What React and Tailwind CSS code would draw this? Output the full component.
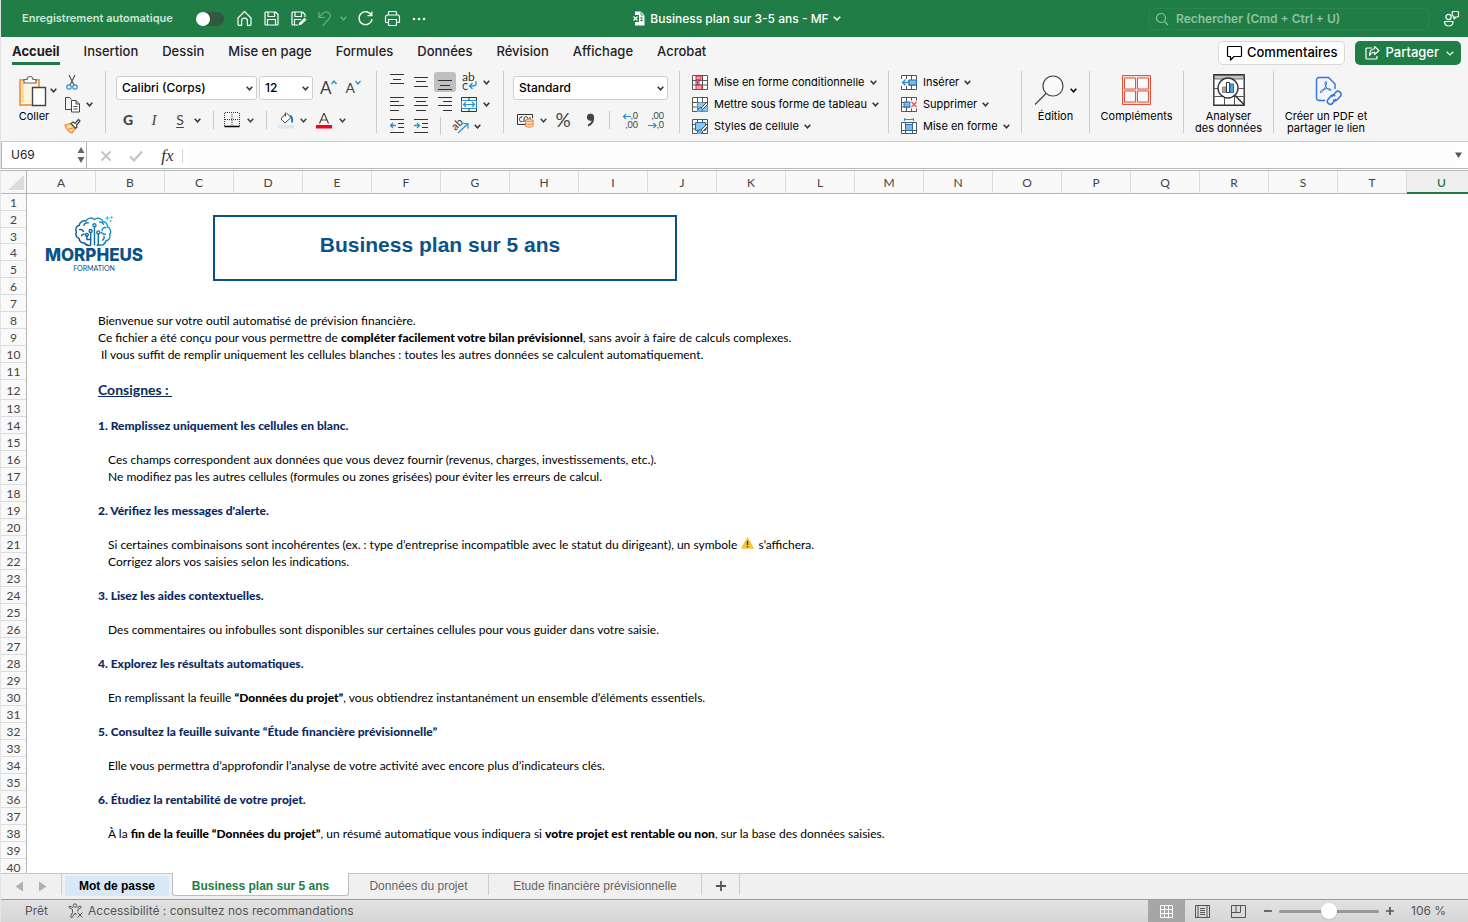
import React, { useState } from "react";

const MENU_TABS = [
  "Accueil",
  "Insertion",
  "Dessin",
  "Mise en page",
  "Formules",
  "Données",
  "Révision",
  "Affichage",
  "Acrobat",
];

const COLUMNS = "ABCDEFGHIJKLMNOPQRSTU".split("");
const ROWS = Array.from({ length: 40 }, (_, i) => i + 1);

// kind: "text" starts at the cell edge, "item" is indented, "step" is a bold title
const CONTENT = {
  8: { kind: "text", body: "Bienvenue sur votre outil automatisé de prévision financière." },
  9: {
    kind: "text",
    body: (
      <>
        Ce fichier a été conçu pour vous permettre de{" "}
        <Strong>compléter facilement votre bilan prévisionnel</Strong>, sans
        avoir à faire de calculs complexes.
      </>
    ),
  },
  10: {
    kind: "text",
    body: "\u00a0Il vous suffit de remplir uniquement les cellules blanches : toutes les autres données se calculent automatiquement.",
  },
  12: { kind: "heading", body: "Consignes :\u00a0" },
  14: { kind: "step", body: "1. Remplissez uniquement les cellules en blanc." },
  16: {
    kind: "item",
    body: "Ces champs correspondent aux données que vous devez fournir (revenus, charges, investissements, etc.).",
  },
  17: {
    kind: "item",
    body: "Ne modifiez pas les autres cellules (formules ou zones grisées) pour éviter les erreurs de calcul.",
  },
  19: { kind: "step", body: "2. Vérifiez les messages d'alerte." },
  21: {
    kind: "item",
    body: (
      <>
        Si certaines combinaisons sont incohérentes (ex. : type d’entreprise
        incompatible avec le statut du dirigeant), un symbole <Warning />{" "}
        s’affichera.
      </>
    ),
  },
  22: { kind: "item", body: "Corrigez alors vos saisies selon les indications." },
  24: { kind: "step", body: "3. Lisez les aides contextuelles." },
  26: {
    kind: "item",
    body: "Des commentaires ou infobulles sont disponibles sur certaines cellules pour vous guider dans votre saisie.",
  },
  28: { kind: "step", body: "4. Explorez les résultats automatiques." },
  30: {
    kind: "item",
    body: (
      <>
        En remplissant la feuille <Strong>“Données du projet”</Strong>, vous
        obtiendrez instantanément un ensemble d’éléments essentiels.
      </>
    ),
  },
  32: {
    kind: "step",
    body: "5. Consultez la feuille suivante “Étude financière prévisionnelle”",
  },
  34: {
    kind: "item",
    body: "Elle vous permettra d’approfondir l’analyse de votre activité avec encore plus d’indicateurs clés.",
  },
  36: { kind: "step", body: "6. Étudiez la rentabilité de votre projet." },
  38: {
    kind: "item",
    body: (
      <>
        À la <Strong>fin de la feuille “Données du projet”</Strong>, un résumé
        automatique vous indiquera si{" "}
        <Strong>votre projet est rentable ou non</Strong>, sur la base des
        données saisies.
      </>
    ),
  },
};

const KIND_CLASS = {
  text: "pl-[2px] text-black",
  item: "pl-[12px] text-black",
  step: "pl-[2px] font-black text-[#0b2a63]",
  heading: "pl-[2px] text-[14px] font-bold text-[#0b2a63] underline",
};

function Strong({ children }) {
  return <strong className="font-black">{children}</strong>;
}

function Icon({ w = 16, h = 16, className = "", children }) {
  return (
    <svg
      width={w}
      height={h}
      viewBox={`0 0 ${w} ${h}`}
      fill="none"
      stroke="currentColor"
      className={`shrink-0 ${className}`}
      aria-hidden="true"
    >
      {children}
    </svg>
  );
}

function Chevron({ className = "" }) {
  return (
    <Icon w={7} h={5} className={className}>
      <path d="M.7 .8l2.800 3L6.300 .8" strokeWidth="1.500" />
    </Icon>
  );
}

function Warning() {
  return (
    <svg width="13" height="12" viewBox="0 0 13 12" className="mx-px inline-block align-baseline" aria-label="Attention">
      <path d="M6.500 .5L12.500 11.300H.5z" fill="#fdc62f" stroke="#f0b020" strokeWidth=".6" strokeLinejoin="round" />
      <path d="M6.500 4v4" stroke="#333" strokeWidth="1.400" />
      <circle cx="6.500" cy="9.700" r=".8" fill="#333" />
    </svg>
  );
}

function Separator() {
  return <span className="h-[18px] w-px shrink-0 bg-[#c9c9c9]" />;
}

function TitleBar() {
  const [autoSave, setAutoSave] = useState(false);
  return (
    <header className="grid h-[37px] shrink-0 grid-cols-[1fr_auto_1fr] items-center bg-[#207d45] text-white">
      <div className="flex items-center pl-[21px]">
        <label htmlFor="autosave" className="w-[174px] text-[11px] font-semibold text-[#cfe5d7]">
          Enregistrement automatique
        </label>
        <input
          id="autosave"
          type="checkbox"
          role="switch"
          checked={autoSave}
          onChange={() => setAutoSave(!autoSave)}
          className="h-[14px] w-7 appearance-none rounded-full bg-[#2f5a40] before:block before:h-[14px] before:w-[14px] before:rounded-full before:bg-white checked:before:translate-x-[14px]"
        />
        <div className="ml-[12px] flex items-center gap-[10px]">
          <button type="button" aria-label="Accueil">
            <Icon w={17} h={17}>
              <path d="M2 8L8.500 1.500 15 8v6.300a1 1 0 0 1-1 1h-2.600v-4.200a2.900 2.900 0 0 0-5.800 0v4.200H3a1 1 0 0 1-1-1z" strokeWidth="1.200" strokeLinejoin="round" />
            </Icon>
          </button>
          <button type="button" aria-label="Enregistrer">
            <Icon w={17} h={17}>
              <path d="M3 2h9.500L15 4.500V14a1 1 0 0 1-1 1H3a1 1 0 0 1-1-1V3a1 1 0 0 1 1-1zM5 2v4.500h6.500V2M4.500 15V9.500h8V15" strokeWidth="1.200" strokeLinejoin="round" />
            </Icon>
          </button>
          <button type="button" aria-label="Enregistrer sous">
            <Icon w={17} h={17}>
              <path d="M8 15H3a1 1 0 0 1-1-1V3a1 1 0 0 1 1-1h9.500L15 4.500V7M5 2v4.500h6.500V2M4.500 15V9.500H11" strokeWidth="1.200" strokeLinejoin="round" />
              <path d="M8.500 15.500l1-3 5-4.800 2 2-5 4.900z" fill="white" stroke="none" />
            </Icon>
          </button>
          <button type="button" aria-label="Annuler" className="flex items-center gap-[6px] text-[#6aab83]">
            <Icon w={17} h={17}>
              <path d="M2 1.500v6h6M2 7.200l4-3.900c4-3.500 9 .4 6.700 4.300C11.500 10 8.500 13 5.500 16" strokeWidth="1.200" />
            </Icon>
            <Chevron />
          </button>
          <button type="button" aria-label="Rétablir">
            <Icon w={17} h={17}>
              <path d="M14.500 5.500A6.500 6.500 0 1 0 15 9M14.800 1.500v4.200h-4.300" strokeWidth="1.300" />
            </Icon>
          </button>
          <button type="button" aria-label="Imprimer">
            <Icon w={17} h={17}>
              <path d="M4.500 5V2.500a1 1 0 0 1 1-1h6a1 1 0 0 1 1 1V5M4.500 12.500h-2a1 1 0 0 1-1-1V7a2 2 0 0 1 2-2h10a2 2 0 0 1 2 2v4.500a1 1 0 0 1-1 1h-2M4.500 9.500h8v5a1 1 0 0 1-1 1h-6a1 1 0 0 1-1-1z" strokeWidth="1.200" />
            </Icon>
          </button>
          <button type="button" aria-label="Plus">
            <Icon w={16} h={6}>
              <g fill="currentColor" stroke="none">
                <circle cx="3" cy="3" r="1.300" />
                <circle cx="8" cy="3" r="1.300" />
                <circle cx="13" cy="3" r="1.300" />
              </g>
            </Icon>
          </button>
        </div>
      </div>

      <button type="button" className="flex items-center gap-[5px] pl-1 text-[12px] font-medium">
        <Icon w={13} h={15}>
          <path d="M3 .5h6L12.500 4v10.500H3z" fill="white" stroke="none" />
          <path d="M9 .5V4h3.500" stroke="#207d45" strokeWidth=".8" />
          <rect x="0" y="4" width="7" height="7" fill="#207d45" stroke="none" />
          <path d="M1.500 5.500l4 4M5.500 5.500l-4 4" strokeWidth="1.200" />
          <path d="M8 7h3M8 9.500h3M9.500 6v4.500" stroke="#207d45" strokeWidth=".7" />
        </Icon>
        Business plan sur 3-5 ans - MF
        <Icon w={8} h={5} className="-ml-px">
          <path d="M.7 .8L4 3.900 7.300 .8" strokeWidth="1.500" />
        </Icon>
      </button>

      <div className="flex items-center justify-end gap-[14px] pr-2">
        <div className="flex h-[22px] w-[280px] items-center gap-[7px] rounded border border-[#2a8550] px-[5px] text-[#8fc2a3]">
          <Icon w={14} h={14}>
            <circle cx="6" cy="6" r="4.500" strokeWidth="1.200" />
            <path d="M9.500 9.500l3.500 3.500" strokeWidth="1.200" />
          </Icon>
          <input
            type="search"
            aria-label="Rechercher"
            placeholder="Rechercher (Cmd + Ctrl + U)"
            className="min-w-0 flex-1 bg-transparent text-[12px] font-semibold outline-none placeholder:text-[#8fc2a3]"
          />
        </div>
        <button type="button" aria-label="Présence">
          <Icon w={17} h={18}>
            <circle cx="5.500" cy="7" r="2.600" strokeWidth="1.200" />
            <path d="M1.500 11.500h8.500c0 6-8.500 6-8.500 0zM9.500 1.500h5a1 1 0 0 1 1 1v3.500a1 1 0 0 1-1 1h-1.500l-2 2V7l-2-2z" strokeWidth="1.200" strokeLinejoin="round" />
          </Icon>
        </button>
      </div>
    </header>
  );
}

function MenuBar() {
  return (
    <nav className="flex h-[31px] shrink-0 items-start justify-between pr-[7px] pl-[11px]">
      <div className="flex gap-[24px] pt-1">
        {MENU_TABS.map((tab, i) => (
          <button
            key={tab}
            type="button"
            className={
              i === 0
                ? "border-b-[3px] border-[#1f7a45] text-[13px] leading-[21px] font-bold text-[#222]"
                : "border-b-[3px] border-transparent text-[13px] leading-[21px] font-medium text-[#222]"
            }
          >
            {tab}
          </button>
        ))}
      </div>
      <div className="flex gap-[10px] pt-1 text-[13px] font-medium">
        <button
          type="button"
          className="flex h-6 items-center gap-1 rounded-[5px] border border-[#d8d8d8] bg-white px-[7px] text-black"
        >
          <Icon w={17} h={16}>
            <path d="M2.500 1.500h12a1 1 0 0 1 1 1v8a1 1 0 0 1-1 1H8L4.500 15v-3.500h-2a1 1 0 0 1-1-1v-8a1 1 0 0 1 1-1z" strokeWidth="1.200" strokeLinejoin="round" />
          </Icon>
          Commentaires
        </button>
        <button
          type="button"
          className="flex h-6 items-center gap-1 rounded-[5px] bg-[#207d45] pr-[7px] pl-[9px] text-white"
        >
          <Icon w={17} h={16}>
            <path d="M8 3H3a1 1 0 0 0-1 1v9a1 1 0 0 0 1 1h9a1 1 0 0 0 1-1v-2" strokeWidth="1.200" />
            <path d="M10.500 1.500l4.500 4-4.500 4V7.300C8 7.200 6.500 8.500 5.500 10.500c0-4 2-6.400 5-6.700z" strokeWidth="1.100" strokeLinejoin="round" />
          </Icon>
          Partager
          <Icon w={8} h={5} className="ml-[3px]">
            <path d="M.7 .8L4 3.900 7.300 .8" strokeWidth="1.200" />
          </Icon>
        </button>
      </div>
    </nav>
  );
}

function Group({ className = "", children }) {
  return (
    <div className={`h-[62px] shrink-0 border-r border-[#cdcdcd] ${className}`}>
      {children}
    </div>
  );
}

function RibbonSelect({ label, value, className }) {
  return (
    <span className={`relative flex items-center ${className}`}>
      <select
        aria-label={label}
        defaultValue={value}
        className="h-6 w-full appearance-none rounded-[3px] border border-[#cfcfcf] bg-white pl-[5px] text-[12px] font-medium text-black"
      >
        <option>{value}</option>
      </select>
      <Chevron className="pointer-events-none absolute right-1" />
    </span>
  );
}

// lines: [x1, x2, y] triples
function Lines({ w = 16, h = 16, lines, children }) {
  return (
    <Icon w={w} h={h}>
      {lines.map(([a, b, y]) => (
        <path key={y} d={`M${a} ${y}.5H${b}`} />
      ))}
      {children}
    </Icon>
  );
}

function ClipboardGroup() {
  return (
    <Group className="flex w-[105px] pl-[15px]">
      <div className="flex w-9 flex-col items-center">
        <button type="button" className="flex flex-col items-center gap-[2px] pt-1 text-[11px] leading-[14px] text-black">
          <Icon w={30} h={32}>
            <path d="M1 5h19v25H1z" fill="#fdf3df" stroke="#f0a255" strokeWidth="2" />
            <path d="M3.500 7v20.500" stroke="#fbd798" strokeWidth="2.500" />
            <path d="M5 8V4.500h3c.5-4 5.500-4 6 0h3V8z" fill="#fff" stroke="#666" strokeWidth="1.200" />
            <path d="M13.500 12.500h13v18h-13z" fill="#fff" stroke="#444" strokeWidth="1.400" />
          </Icon>
          Coller
        </button>
      </div>
      <Chevron className="mt-[17px] -ml-[2px]" />
      <div className="ml-[7px] flex flex-col gap-[5px] pt-[3px]">
        <button type="button" aria-label="Couper">
          <Icon w={16} h={17}>
            <path d="M5 1l5 10M11 1L6 11" stroke="#555" strokeWidth="1.200" />
            <circle cx="5" cy="13" r="2.200" stroke="#2a8fd0" strokeWidth="1.200" />
            <circle cx="11" cy="13" r="2.200" stroke="#2a8fd0" strokeWidth="1.200" />
          </Icon>
        </button>
        <button type="button" aria-label="Copier" className="flex items-center gap-[5px]">
          <Icon w={17} h={17}>
            <path d="M7 13.500H1.500v-12h4l2 2" stroke="#444" />
            <path d="M7.500 4.500H12l3.500 3.500v8h-8zM12 4.500V8h3.500M9.500 10.500h4M9.500 13h4" fill="#fff" stroke="#444" />
          </Icon>
          <Chevron />
        </button>
        <button type="button" aria-label="Reproduire la mise en forme">
          <Icon w={17} h={16}>
            <path d="M1 7l6-1.500 4.500 4.500L8 15C5 14 2.500 11 1 7z" fill="#fbd798" stroke="#ea8a3c" strokeWidth="1.200" />
            <path d="M4.500 11l5-1" stroke="#ea8a3c" />
            <path d="M7 5.500l2-1.500 2 1.500L14.500 1.500 16 3l-3.500 4 .5 2-1.500 1.500z" fill="#fff" stroke="#444" strokeWidth="1.200" />
          </Icon>
        </button>
      </div>
    </Group>
  );
}

function FontGroup() {
  return (
    <Group className="w-[271px] pt-[5px] pl-[10px]">
      <div className="flex items-center">
        <RibbonSelect label="Police" value="Calibri (Corps)" className="w-[141px]" />
        <RibbonSelect label="Taille" value="12" className="ml-[2px] w-[54px]" />
        <button type="button" aria-label="Augmenter la taille" className="ml-[7px] flex font-[Lato] text-[17px] leading-[22px] text-[#444]">
          A
          <Icon w={6} h={5} className="mt-[3px] -ml-px">
            <path d="M.5 4L3 1l2.500 3" stroke="#2a8fd0" strokeWidth="1.300" />
          </Icon>
        </button>
        <button type="button" aria-label="Réduire la taille" className="ml-[9px] flex font-[Lato] text-[14px] leading-[22px] text-[#444]">
          A
          <Icon w={6} h={5} className="mt-[3px]">
            <path d="M.5 1L3 4l2.500-3" stroke="#2a8fd0" strokeWidth="1.300" />
          </Icon>
        </button>
      </div>
      <div className="mt-[8px] flex h-6 items-center text-[#444]">
        <button type="button" className="w-6 font-[Lato] text-[14px] leading-5 font-black">G</button>
        <button type="button" className="ml-[2px] w-6 font-['Liberation_Serif'] text-[15px] leading-5 italic">I</button>
        <button type="button" className="ml-[2px] w-6 font-[Lato] text-[14px] leading-5 underline underline-offset-2">S</button>
        <Chevron className="ml-[2px] text-[#333]" />
        <span className="w-[12px]" />
        <Separator />
        <button type="button" aria-label="Bordures" className="ml-[10px] flex items-center gap-[7px]">
          <Icon w={16} h={16}>
            <path d="M1 .5h14M.5 1v13M15.500 1v13M8 2v12M1 7.500h14" strokeDasharray="1 1" stroke="#333" />
            <path d="M.5 14.500h15" stroke="#000" strokeWidth="1.500" />
          </Icon>
          <Chevron />
        </button>
        <span className="w-[12px]" />
        <Separator />
        <button type="button" aria-label="Couleur de remplissage" className="ml-[11px] flex items-center gap-[5px]">
          <Icon w={17} h={17}>
            <path d="M0 13h16v3.500H0z" fill="#d9e8f7" stroke="none" />
            <path d="M7.500 1.500L3 7l4 4 6-5.500-4.500-4.500" fill="#fff" stroke="#444" />
            <path d="M7.500 .5v4" stroke="#444" />
            <path d="M12 4c2.500.5 2.500 3 2 6.500" stroke="#1d6fb5" strokeWidth="1.800" />
          </Icon>
          <Chevron />
        </button>
        <button type="button" aria-label="Couleur de police" className="ml-[9px] flex items-center gap-[7px]">
          <Icon w={16} h={17}>
            <path d="M3.500 11.500l4.300-10h.4l4.300 10M5 8h6" stroke="#444" strokeWidth="1.200" />
            <path d="M0 13h16v3.500H0z" fill="#f8001c" stroke="none" />
          </Icon>
          <Chevron />
        </button>
      </div>
    </Group>
  );
}

function AlignGroup() {
  return (
    <Group className="flex w-[127px] flex-col pl-[9px] text-[#333]">
      <div className="flex h-[22px] shrink-0 items-center gap-[2px]">
        <button type="button" aria-label="Aligner en haut" className="flex h-5 w-[22px] justify-center">
          <Lines h={20} lines={[[1, 15, 2], [4, 12, 7], [1, 15, 11]]} />
        </button>
        <button type="button" aria-label="Aligner au centre" className="flex h-5 w-[22px] justify-center">
          <Lines h={20} lines={[[1, 15, 5], [3, 13, 9], [1, 15, 14]]} />
        </button>
        <button type="button" aria-label="Aligner en bas" className="flex h-5 w-[22px] justify-center rounded-[3px] bg-[#c0c0c0]">
          <Lines h={20} lines={[[1, 15, 8], [3, 13, 13], [1, 15, 17]]} />
        </button>
        <button type="button" aria-label="Renvoyer à la ligne" className="ml-[4px] flex items-center gap-[4px]">
          <span className="flex h-5 w-[17px] flex-col text-left font-[Lato] text-[12px] leading-[9px] text-[#333]">
            ab
            <Icon w={16} h={10}>
              <path d="M5.500 3C3.500 1.500 1 2.800 1 5.500s2.500 4 4.500 2.500" stroke="#444" strokeWidth="1.100" />
              <path d="M13.500 0c1.500 3 .5 5-3 5H7.500M10.500 2l-3 3 3 3" stroke="#2a8fd0" strokeWidth="1.300" />
            </Icon>
          </span>
          <Chevron />
        </button>
      </div>
      <div className="flex h-[22px] shrink-0 items-center gap-[2px]">
        <button type="button" aria-label="Gauche" className="flex w-[22px] justify-center">
          <Lines lines={[[1, 15, 1], [1, 10, 5], [1, 15, 9], [1, 10, 14]]} />
        </button>
        <button type="button" aria-label="Centrer" className="flex w-[22px] justify-center">
          <Lines lines={[[1, 15, 1], [3, 13, 5], [1, 15, 9], [3, 13, 14]]} />
        </button>
        <button type="button" aria-label="Droite" className="flex w-[22px] justify-center">
          <Lines lines={[[1, 15, 1], [6, 15, 5], [1, 15, 9], [6, 15, 14]]} />
        </button>
        <button type="button" aria-label="Fusionner" className="ml-[3px] flex items-center gap-[6px]">
          <Icon w={16} h={15}>
            <path d="M.5 .5h15v14H.5zM8 .5v3M8 11.500v3" stroke="#333" />
            <path d="M.5 3.500h15v8H.5z" fill="#fff" stroke="#2a8fd0" />
            <path d="M3 7.500h10M5 5L2.500 7.500 5 10M11 5l2.500 2.500L11 10" stroke="#2a8fd0" strokeWidth="1.200" />
          </Icon>
          <Chevron />
        </button>
      </div>
      <div className="flex h-[22px] shrink-0 items-center gap-[2px]">
        <button type="button" aria-label="Diminuer le retrait" className="flex w-[22px] justify-center">
          <Lines lines={[[1, 15, 1], [9, 15, 5], [9, 15, 9], [1, 15, 14]]}>
            <path d="M7 7.500H1.500M4 5L1.500 7.500 4 10" stroke="#2a8fd0" strokeWidth="1.300" />
          </Lines>
        </button>
        <button type="button" aria-label="Augmenter le retrait" className="flex w-[22px] justify-center">
          <Lines lines={[[1, 15, 1], [9, 15, 5], [9, 15, 9], [1, 15, 14]]}>
            <path d="M1 7.500h5.500M4 5l2.500 2.500L4 10" stroke="#2a8fd0" strokeWidth="1.300" />
          </Lines>
        </button>
        <span className="ml-[6px] flex"><Separator /></span>
        <button type="button" aria-label="Orientation" className="ml-[8px] flex items-center gap-[5px]">
          <span className="relative flex h-4 w-[18px] items-start">
            <span className="-rotate-45 font-[Lato] text-[11px] leading-3 text-[#333]">ab</span>
            <Icon w={12} h={12} className="absolute right-0 bottom-0">
              <path d="M1 11L11 1.500M6 1.500h5v5" stroke="#2a8fd0" strokeWidth="1.200" />
            </Icon>
          </span>
          <Chevron />
        </button>
      </div>
    </Group>
  );
}

function NumberGroup() {
  return (
    <Group className="w-[176px] pt-[5px] pl-[9px]">
      <RibbonSelect label="Format de nombre" value="Standard" className="w-[155px]" />
      <div className="mt-[8px] flex h-6 items-center text-[#444]">
        <button type="button" aria-label="Format monétaire" className="ml-[4px] flex items-center gap-[6px]">
          <Icon w={17} h={15}>
            <path d="M8 11.500H.5v-10h15V5" stroke="#333" />
            <path d="M5.500 4C3 3.500 2.500 5 2.500 6.500S3.500 9 5.500 8.500M7 9V6c0-3 4-3 4 0M13 4v2" stroke="#333" />
            <path d="M8.500 7v6c1.500 1.500 6 1.500 7.500 0V7c-1.500-1.300-6-1.300-7.500 0zM8.500 7.500c1.500 1.200 6 1.200 7.500 0M8.500 10.500c1.500 1.200 6 1.200 7.500 0" fill="#fde4c8" stroke="#ea7a2c" />
          </Icon>
          <Chevron />
        </button>
        <button type="button" className="ml-[7px] w-[18px] font-[Lato] text-[19px] leading-6">%</button>
        <button type="button" aria-label="Séparateur de milliers" className="ml-[14px]">
          <Icon w={9} h={14}>
            <path d="M2 12.500C6 11 7.200 8.500 7 5" strokeWidth="2" />
            <circle cx="4.500" cy="4.200" r="3.200" fill="currentColor" />
          </Icon>
        </button>
        <span className="w-[14px]" />
        <Separator />
        <button type="button" aria-label="Ajouter une décimale" className="relative ml-[12px] block h-[18px] w-4 text-right font-[Lato] text-[9px] leading-[9px]">
          ,0
          <br />
          ,00
          <Icon w={10} h={7} className="absolute top-[2px] left-0">
            <path d="M9 3.500H1.500M4 1L1.500 3.500 4 6" stroke="#2a8fd0" strokeWidth="1.200" />
          </Icon>
        </button>
        <button type="button" aria-label="Réduire les décimales" className="relative ml-[10px] block h-[18px] w-4 text-right font-[Lato] text-[9px] leading-[9px]">
          ,00
          <br />
          ,0
          <Icon w={10} h={7} className="absolute bottom-0 left-0">
            <path d="M0 3.500h8M5.500 1L8 3.500 5.500 6" stroke="#2a8fd0" strokeWidth="1.200" />
          </Icon>
        </button>
      </div>
    </Group>
  );
}

function GridBase() {
  return <path d="M.5 .5h15v14H.5zM5.500 .5v14M10.500 .5v14M.5 5.500h15M.5 10h15" fill="#fff" stroke="#555" />;
}

function Brush() {
  return (
    <>
      <path d="M15.500 4.500L9 11l1.500 1.500 5-5z" fill="#fff" stroke="#444" />
      <path d="M8.500 10.500c-3 0-2 3-4.500 4.500 3 1 6.500 0 6.500-2.500z" fill="#7db8e8" stroke="#1d6fb5" />
    </>
  );
}

function RowButton({ icon, children }) {
  return (
    <button type="button" className="flex h-[22px] shrink-0 items-center text-[11px] text-black">
      {icon}
      <span className="mr-[5px] ml-[6px]">{children}</span>
      <Chevron className="text-[#333]" />
    </button>
  );
}

function StylesGroup() {
  return (
    <Group className="flex w-[209px] flex-col pl-[12px]">
      <RowButton
        icon={
          <Icon w={16} h={15}>
            <GridBase />
            <path d="M4 1h5v4H4zM4 10h6v4.500H4zM4 5h3v5H4z" fill="#f8a0a8" stroke="#d8232e" />
            <path d="M4.500 5.500h2v4h-2z" fill="#2a8fd0" stroke="none" />
          </Icon>
        }
      >
        Mise en forme conditionnelle
      </RowButton>
      <RowButton
        icon={
          <Icon w={16} h={15}>
            <GridBase />
            <path d="M5.500 5.500h10v9h-10z" fill="#8cc4ee" stroke="none" />
            <Brush />
          </Icon>
        }
      >
        Mettre sous forme de tableau
      </RowButton>
      <RowButton
        icon={
          <Icon w={16} h={15}>
            <GridBase />
            <path d="M3.500 3.500h10v8h-10z" fill="#8cc4ee" stroke="#1d6fb5" />
            <Brush />
          </Icon>
        }
      >
        Styles de cellule
      </RowButton>
    </Group>
  );
}

function CellsGroup() {
  return (
    <Group className="flex w-[133px] flex-col pl-[12px]">
      <RowButton
        icon={
          <Icon w={16} h={15}>
            <GridBase />
            <path d="M8 5h7.500v5H8z" fill="#7db8e8" stroke="#1d6fb5" />
            <path d="M0 4h7v7H0z" fill="#f5f5f5" stroke="none" />
            <path d="M9 7.500H1.500M4.500 4.500l-3 3 3 3" stroke="#2a8fd0" strokeWidth="1.300" />
          </Icon>
        }
      >
        Insérer
      </RowButton>
      <RowButton
        icon={
          <Icon w={16} h={15}>
            <GridBase />
            <path d="M3 5h6v5H3z" fill="#7db8e8" stroke="#1d6fb5" />
            <path d="M9.500 3.500H16v8H9.500z" fill="#f5f5f5" stroke="none" />
            <path d="M10.500 5l5 5M15.500 5l-5 5" stroke="#e8505a" strokeWidth="1.400" />
          </Icon>
        }
      >
        Supprimer
      </RowButton>
      <RowButton
        icon={
          <Icon w={16} h={16}>
            <path d="M.5 4.500h15v11H.5zM4.500 4.500v11M11.500 4.500v11M.5 12.500h15" fill="#fff" stroke="#555" />
            <path d="M4.500 6.500h7v6h-7z" fill="#7db8e8" stroke="#1d6fb5" />
            <path d="M3.500 1.500h9M3.500 0v3M12.500 0v3" stroke="#2a8fd0" />
          </Icon>
        }
      >
        Mise en forme
      </RowButton>
    </Group>
  );
}

function BigButton({ icon, children }) {
  return (
    <button
      type="button"
      className="flex w-full flex-col items-center text-center text-[11px] leading-3 whitespace-nowrap text-black"
    >
      <span className="mb-[4px] flex h-[35px] items-end">{icon}</span>
      {children}
    </button>
  );
}

function Ribbon() {
  return (
    <div className="flex h-[74px] shrink-0 overflow-hidden border-b border-[#c8c8c8] pt-[3px]">
      <ClipboardGroup />
      <FontGroup />
      <AlignGroup />
      <NumberGroup />
      <StylesGroup />
      <CellsGroup />
      <Group className="w-[68px]">
        <BigButton
          icon={
            <span className="flex items-center gap-[5px]">
              <Icon w={31} h={31}>
                <circle cx="19" cy="11" r="10" fill="#fafafa" stroke="#444" strokeWidth="1.200" />
                <path d="M12 18.500L1 29.500" stroke="#444" strokeWidth="1.300" />
              </Icon>
              <Chevron />
            </span>
          }
        >
          Édition
        </BigButton>
      </Group>
      <Group className="w-[94px]">
        <BigButton
          icon={
            <Icon w={30} h={31} className="text-[#e0553d]">
              <path d="M.5 .5h28v29H.5z" fill="#f9d9d2" stroke="#e0553d" />
              <path d="M2.500 3h11v11h-11zM15.500 3h11v11h-11zM2.500 16h11v11h-11zM15.500 16h11v11h-11z" fill="#fafafa" />
            </Icon>
          }
        >
          Compléments
        </BigButton>
      </Group>
      <Group className="w-[90px]">
        <BigButton
          icon={
            <Icon w={32} h={32}>
              <path d="M.8 .8h30.400v30.400H.8z" fill="#fff" stroke="#333" strokeWidth="1.400" />
              <path d="M1.500 1.500h29V5h-29z" fill="#c4c4c4" stroke="#555" strokeWidth=".8" />
              <path d="M1 14.500h5M1 22.500h30M11.500 22v9M21.500 22v9M26 14.500h5" stroke="#555" />
              <circle cx="15" cy="14" r="10" fill="#fff" stroke="#333" strokeWidth="1.400" />
              <path d="M22 21.500l9 9" stroke="#333" strokeWidth="1.600" />
              <path d="M9.500 13h3.500v5.500H9.500z" fill="#aaa" stroke="#888" />
              <path d="M13.500 8.500h3v10h-3z" fill="#fff" stroke="#333" />
              <path d="M17 10h3.500v8.500H17z" fill="#55a5e0" stroke="#1d6fb5" />
            </Icon>
          }
        >
          Analyser
          <br />
          des données
        </BigButton>
      </Group>
      <div className="w-[104px] shrink-0">
        <BigButton
          icon={
            <Icon w={28} h={30} className="ml-[6px] text-[#2f74dc]">
              <path d="M10 24.500H4a2.500 2.500 0 0 1-2.500-2.500V4A2.500 2.500 0 0 1 4 1.500h9.500l6.500 6.500v5" strokeWidth="1.400" />
              <path d="M5.500 16.500c-1.500-1.500 3-3.500 6-3.800 3-.4 5.500.8 4.500 1.600-1.500 1-5-2.500-5.800-5.500-.6-2.500.2-3.800 1-3.200 1.200 1-.7 5.900-2.700 8.400-1.300 1.800-2.400 3-3 2.500z" strokeWidth="1" />
              <g strokeWidth="1.500" strokeLinecap="round">
                <path d="M17 20.500l3.500-4a3 3 0 0 1 4.800 3.700l-2.800 3.300a3 3 0 0 1-4 .5" />
                <path d="M20.500 23.500L17.800 27a3 3 0 0 1-4.800-3.600l2.700-3.200a3 3 0 0 1 4-.5" />
              </g>
            </Icon>
          }
        >
          Créer un PDF et
          <br />
          partager le lien
        </BigButton>
      </div>
    </div>
  );
}

function FormulaBar() {
  return (
    <div className="flex h-[29px] shrink-0 items-center border-b-[3px] border-double border-[#b8b8b8] bg-white">
      <div className="flex h-full w-[86px] items-center justify-between border-x border-[#b5b5b5] pr-px">
        <input
          aria-label="Zone Nom"
          defaultValue="U69"
          className="w-[60px] bg-transparent pl-[9px] text-[12px] text-[#222] outline-none"
        />
        <Icon w={8} h={18}>
          <path d="M4 1l3.500 6h-7zM4 17l3.500-6h-7z" fill="#666" stroke="none" />
        </Icon>
      </div>
      <div className="flex items-center pt-px text-[#c4c4c4]">
        <button type="button" aria-label="Annuler la saisie" className="ml-[13px]">
          <Icon w={12} h={12}>
            <path d="M1.500 1.500l9 9M10.500 1.500l-9 9" strokeWidth="2" />
          </Icon>
        </button>
        <button type="button" aria-label="Valider la saisie" className="ml-[17px]">
          <Icon w={14} h={12}>
            <path d="M1 6.500l4 4L13 1.500" strokeWidth="2.200" />
          </Icon>
        </button>
        <button
          type="button"
          aria-label="Insérer une fonction"
          className="ml-[17px] w-[15px] font-['Liberation_Serif'] text-[17px] leading-5 text-[#333] italic"
        >
          fx
        </button>
        <span className="ml-[7px] h-[14px] w-px bg-[#d5d5d5]" />
      </div>
      <input aria-label="Barre de formule" className="ml-[7px] h-full min-w-0 flex-1 bg-[#fdfdfd] text-[12px] outline-none" />
      <button type="button" aria-label="Développer" className="mr-[6px]">
        <Icon w={7} h={6}>
          <path d="M0 .5h7L3.500 6z" fill="#555" stroke="none" />
        </Icon>
      </button>
    </div>
  );
}

function Logo() {
  return (
    <div className="flex w-[100px] flex-col items-center">
      <svg width="40" height="34" viewBox="0 0 42 34" fill="none" aria-hidden="true">
        <defs>
          <linearGradient id="brain" x1="0" y1="34" x2="42" y2="0" gradientUnits="userSpaceOnUse">
            <stop offset=".2" stopColor="#0b5288" />
            <stop offset="1" stopColor="#1cb5ea" />
          </linearGradient>
        </defs>
        <g stroke="url(#brain)" strokeWidth="1.500" strokeLinecap="round" strokeLinejoin="round">
          <path d="M17 32c-3 .5-5-.5-6-2.500-3 .5-5.500-1.500-5.500-4.500-3-1-4.500-4-3-7-1.500-3 0-6.500 3-7 .5-3.500 4-5.500 7-4.500 2-3.500 6.500-4 9-1.500 3-2.500 7.500-1.500 9 2 3 .5 5 3 4.500 5.500 3.500 1.500 4.500 5.500 2.500 8 1 3.500-1 6.500-4 7-1 3.500-4 5-7 4l-2 .5" />
          <path d="M21.500 31.500V12.500M17.500 31.500V18.500M25.500 31.500V20M13.500 22.500v3.500h4" />
          <path d="M6 15.500c2-.5 3.500.5 4 2M10.500 11c.5-2 2.500-3 4.500-2.500M27 7.500c2 0 3.500 1 4 2.500M33.500 13.500c-2.500-.5-4 1-4 3M33 20.500c-2 0-3.500-.5-4.500-2M30 26.500c1.500-1 2-2.500 1.500-4M8 22c.5-1 1.500-1.500 2.500-1.500" />
          <circle cx="21.500" cy="11" r="1.600" />
          <circle cx="17.500" cy="17" r="1.600" />
          <circle cx="25.500" cy="18.500" r="1.600" />
          <circle cx="13.500" cy="21" r="1.500" />
        </g>
        <path d="M35 1v5M32.500 3.500h5M39.500 1.500v2.500M38.300 2.700h2.500M38.500 5.500v2M37.500 6.500h2" stroke="#1cb5ea" strokeWidth=".9" />
      </svg>
      <div className="-mt-px font-[Inter] text-[17px] leading-[17px] font-extrabold text-[#0b5288]">MORPHEUS</div>
      <div className="font-[Lato] text-[7px] leading-[8px] text-[#0b5288]">FORMATION</div>
    </div>
  );
}

function rowHeight(row) {
  if (row === 3) return "h-[16px] leading-[15px]";
  if (row === 12) return "h-[20px] leading-[18px]";
  return "h-[17px] leading-[16px]";
}

function Sheet() {
  return (
    <main className="relative min-h-0 flex-1 overflow-hidden bg-white font-[Lato,sans-serif]">
      <table className="w-[1475px] table-fixed border-separate border-spacing-0">
        <colgroup>
          <col className="w-[26px]" />
          {COLUMNS.map((c) => (
            <col key={c} className="w-[69px]" />
          ))}
        </colgroup>
        <thead>
          <tr className="h-[23px] text-[12px]">
            <th className="border-r border-b border-[#b5b5b5] bg-[#f7f7f7] p-0">
              <Icon w={18} h={17} className="ml-[6px]">
                <path d="M17 1v15H1z" fill="#dcdcdc" stroke="none" />
              </Icon>
            </th>
            {COLUMNS.map((c) => (
              <th
                key={c}
                scope="col"
                className={
                  c === "U"
                    ? "border-b-2 border-b-[#1f7a45] bg-[#efefef] p-0 pt-[2px] font-semibold text-[#1f7a45]"
                    : "border-r border-b border-r-[#dcdcdc] border-b-[#b5b5b5] bg-[#f9f9f9] p-0 pt-[2px] font-normal text-[#444]"
                }
              >
                {c}
              </th>
            ))}
          </tr>
        </thead>
        <tbody>
          {ROWS.map((row) => {
            const cell = CONTENT[row];
            return (
              <tr key={row} className={rowHeight(row)}>
                <th
                  scope="row"
                  className="border-r border-b border-r-[#b5b5b5] border-b-[#dcdcdc] bg-[#f9f9f9] p-0 pt-px text-[12px] leading-[13px] font-normal text-[#444]"
                >
                  {row}
                </th>
                <td className="p-0" />
                <td
                  colSpan={20}
                  className={`p-0 text-[12px] whitespace-nowrap ${cell ? KIND_CLASS[cell.kind] : ""}`}
                >
                  {cell?.body}
                </td>
              </tr>
            );
          })}
        </tbody>
      </table>

      {/* objects floating over the cells */}
      <div className="absolute top-[43px] left-[43px]">
        <Logo />
      </div>
      <div className="absolute top-[44px] left-[212px] flex h-[66px] w-[464px] justify-center border-2 border-[#0b5288] bg-white pt-[14px] pr-[10px]">
        <h1 className="font-['Liberation_Sans'] text-[21px] leading-[28px] font-bold text-[#0b5288]">
          Business plan sur 5 ans
        </h1>
      </div>
    </main>
  );
}

function SheetTabs() {
  return (
    <div className="flex h-[26px] shrink-0 border-t border-[#c8c8c8] bg-[#f0f0f0] font-['Liberation_Sans',sans-serif] text-[12px] text-[#666]">
      <div className="flex h-[21px] w-[61px] items-center gap-[14px] border-r border-[#cdcdcd] pt-1 pl-[14px]">
        <button type="button" aria-label="Feuille précédente">
          <Icon w={9} h={11}>
            <path d="M8 .5v10L.5 5.500z" fill="#b0b0b0" stroke="none" />
          </Icon>
        </button>
        <button type="button" aria-label="Feuille suivante">
          <Icon w={9} h={11}>
            <path d="M1 .5v10l7.500-5z" fill="#b0b0b0" stroke="none" />
          </Icon>
        </button>
      </div>
      <button type="button" className="mx-[3px] mt-[2px] h-5 w-[104px] bg-[#d9e8f7] font-bold text-black">
        Mot de passe
      </button>
      <button
        type="button"
        className="-mt-px h-[23px] w-[177px] rounded-b-[3px] border-x border-b border-[#bdbdbd] bg-white pt-[3px] font-bold text-[#207d45]"
      >
        Business plan sur 5 ans
      </button>
      <button type="button" className="h-[21px] w-[140px] border-r border-[#cdcdcd] pt-[3px]">
        Données du projet
      </button>
      <button type="button" className="h-[21px] w-[213px] border-r border-[#cdcdcd] pt-[3px]">
        Etude financière prévisionnelle
      </button>
      <button
        type="button"
        aria-label="Nouvelle feuille"
        className="flex h-[21px] w-[38px] items-center justify-center border-r border-[#cdcdcd] pt-[3px]"
      >
        <Icon w={10} h={10}>
          <path d="M5 0v10M0 5h10" stroke="#555" strokeWidth="1.800" />
        </Icon>
      </button>
    </div>
  );
}

function StatusBar() {
  const [zoom, setZoom] = useState(106);
  return (
    <footer className="flex h-[23px] shrink-0 items-center justify-between border-t border-[#9a9a9a] bg-gradient-to-b from-[#e2e2e2] to-[#d6d6d6] text-[12px] text-[#555]">
      <div className="flex items-center pl-6">
        <span className="w-[43px]">Prêt</span>
        <button type="button" className="flex items-center gap-[4px]">
          <Icon w={16} h={16}>
            <circle cx="7" cy="2.500" r="1.700" />
            <path d="M5 4.500L1.500 3 1 4.500l3.500 2v3L2.500 14l1.500.7L7 10l1.500 2M9 4.500L12.500 3l.7 1.500-3.400 2v2M9.500 9.500l5 5M14.500 9.500l-5 5" />
          </Icon>
          Accessibilité : consultez nos recommandations
        </button>
      </div>
      <div className="flex h-full items-center">
        <button type="button" aria-label="Normal" className="flex h-full w-[37px] items-center justify-center bg-[#a6a6a6] text-white">
          <Icon w={13} h={13}>
            <path d="M.5 .5h12v12H.5zM4.500 .5v12M8.500 .5v12M.5 4.500h12M.5 8.500h12" />
          </Icon>
        </button>
        <button type="button" aria-label="Mise en page" className="flex w-[35px] justify-center">
          <Icon w={15} h={13}>
            <path d="M.5 .5h14v12H.5zM3 .5v12M12 .5v12M5 3.500h5M5 5.500h5M5 7.500h5M5 9.500h5" />
          </Icon>
        </button>
        <button type="button" aria-label="Sauts de page" className="flex w-9 justify-center">
          <Icon w={15} h={13}>
            <path d="M.5 .5h14v12H.5zM.5 7.500h9M5 .5v7M9.500 .5v7" />
          </Icon>
        </button>
        <button type="button" aria-label="Zoom arrière" className="ml-2" onClick={() => setZoom(Math.max(10, zoom - 10))}>
          <Icon w={8} h={8}>
            <path d="M0 4h8" strokeWidth="1.700" />
          </Icon>
        </button>
        <input
          type="range"
          aria-label="Zoom"
          min="10"
          max="200"
          value={zoom}
          onChange={(e) => setZoom(Number(e.target.value))}
          className="mx-[7px] h-[3px] w-[100px] appearance-none rounded-full bg-[#999] [&::-webkit-slider-thumb]:h-4 [&::-webkit-slider-thumb]:w-4 [&::-webkit-slider-thumb]:appearance-none [&::-webkit-slider-thumb]:rounded-full [&::-webkit-slider-thumb]:bg-white [&::-webkit-slider-thumb]:shadow"
        />
        <button type="button" aria-label="Zoom avant" onClick={() => setZoom(Math.min(200, zoom + 10))}>
          <Icon w={8} h={8}>
            <path d="M0 4h8M4 0v8" strokeWidth="1.700" />
          </Icon>
        </button>
        <span className="w-[74px] pl-[17px]">{zoom} %</span>
      </div>
    </footer>
  );
}

export default function App() {
  return (
    <div className="flex h-screen flex-col overflow-hidden border-l border-[#e4e4e4] bg-[#f5f5f5] font-[Inter,sans-serif] text-[#333]">
      <TitleBar />
      <MenuBar />
      <Ribbon />
      <FormulaBar />
      <Sheet />
      <SheetTabs />
      <StatusBar />
    </div>
  );
}
